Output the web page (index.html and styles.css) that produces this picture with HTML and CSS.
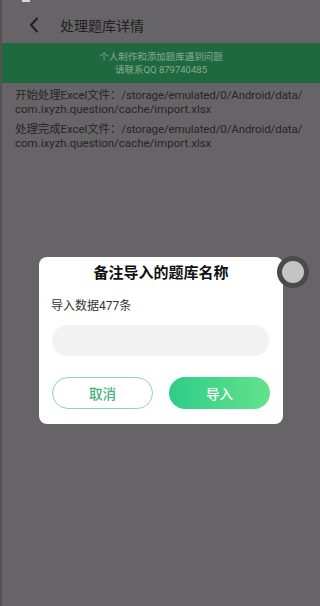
FILE: index.html
```html
<!DOCTYPE html>
<html lang="zh">
<head>
    <meta charset="UTF-8">
    <meta name="viewport" content="width=device-width, initial-scale=1.0">
    <title>处理题库详情</title>
    <link rel="stylesheet" href="styles.css">
</head>
<body>

    <div class="page">
        <div class="status-bar"><span class="status-mark"></span></div>

        <div class="header">
            <svg class="back" width="12" height="16" viewBox="0 0 12 16">
                <path d="M9 1.5 L3 8 L9 14.5" fill="none" stroke="#1f1f1f" stroke-width="2" stroke-linecap="round" stroke-linejoin="round"/>
            </svg>
            <span class="title">处理题库详情</span>
        </div>

        <div class="notice">
            <p>个人制作和添加题库遇到问题</p>
            <p>请联系QQ 879740485</p>
        </div>

        <div class="log">
            <p><span class="nowrap">开始处理Excel文件：/storage/emulated/0/Android/data/</span><br>com.ixyzh.question/cache/import.xlsx</p>
            <p><span class="nowrap">处理完成Excel文件：/storage/emulated/0/Android/data/</span><br>com.ixyzh.question/cache/import.xlsx</p>
        </div>
    </div>

    <div class="overlay">
        <div class="dialog">
            <h2 class="dialog-title">备注导入的题库名称</h2>
            <p class="dialog-info">导入数据477条</p>
            <input class="name-input" type="text">
            <div class="dialog-buttons">
                <button class="btn btn-cancel">取消</button>
                <button class="btn btn-ok">导入</button>
            </div>
        </div>
    </div>

    <div class="float-ball"><span></span></div>

</body>
</html>
```

FILE: styles.css
```css
body {
    margin: 0;
    padding: 0;
    font-family: Roboto, "Noto Sans CJK SC", sans-serif;
    background-color: #676467; /* dimmed page */
    height: 606px;
    overflow: hidden;
}

.page {
    height: 606px;
    border-left: 2px solid #555256;
    box-sizing: border-box;
}

.status-bar {
    height: 6px;
}

.status-mark {
    display: block;
    width: 8px;
    height: 2px;
    margin-left: 20px;
    background-color: #d8d8d8;
}

.header {
    height: 37px;
    display: flex;
    align-items: center;
    padding-left: 26px;
}

.back {
    margin-right: 20px;
}

.title {
    font-size: 14px;
    color: #1f1f1f;
}

.notice {
    height: 40px;
    background-color: #1e6a3e;
    display: flex;
    flex-direction: column;
    justify-content: center;
    align-items: center;
}

.notice p {
    margin: 0;
    font-size: 9.5px;
    line-height: 13px;
    height: 13px;
    color: #88a893;
}

.log {
    padding: 5px 6px 0 13px;
}

.log p {
    margin: 0 0 6px 0;
    font-size: 11.5px;
    line-height: 14px;
    color: #262626;
}

.nowrap {
    white-space: nowrap;
    letter-spacing: -0.1px;
}

.overlay {
    position: fixed;
    top: 0;
    left: 0;
    right: 0;
    bottom: 0;
    display: flex;
    justify-content: center;
    align-items: flex-start;
    padding-top: 257px;
    padding-left: 2px;
}

.dialog {
    width: 244px;
    height: 167px;
    box-sizing: border-box;
    background-color: #ffffff;
    border-radius: 8px;
    padding: 6px 13px 0 13px;
}

.dialog-title {
    margin: 0;
    font-size: 15px;
    line-height: 20px;
    font-weight: bold;
    text-align: center;
    color: #111111;
}

.dialog-info {
    margin: 15px 0 0 -1px;
    font-size: 12px;
    line-height: 16px;
    color: #333333;
}

.name-input {
    display: block;
    width: 217px;
    height: 31px;
    margin-top: 11px;
    box-sizing: border-box;
    border: none;
    border-radius: 16px;
    background-color: #f2f2f2;
    outline: none;
}

.dialog-buttons {
    display: flex;
    justify-content: space-between;
    margin-top: 21px;
    width: 218px;
}

.btn {
    width: 101px;
    height: 32px;
    border-radius: 16px;
    font-family: Roboto, "Noto Sans CJK SC", sans-serif;
    font-size: 13.5px;
    font-weight: 500;
    cursor: pointer;
}

.btn-cancel {
    background-color: #ffffff;
    border: 1px solid #8fd6b2;
    color: #45b07c;
}

.btn-ok {
    border: none;
    background: linear-gradient(90deg, #2fcd88, #62e28c);
    color: #ffffff;
}

.float-ball {
    position: fixed;
    left: 277px;
    top: 256px;
    width: 32px;
    height: 32px;
    border-radius: 50%;
    background-color: #4b494b;
    display: flex;
    justify-content: center;
    align-items: center;
}

.float-ball span {
    width: 22px;
    height: 22px;
    border-radius: 50%;
    background-color: #c4c4c4;
}
```
